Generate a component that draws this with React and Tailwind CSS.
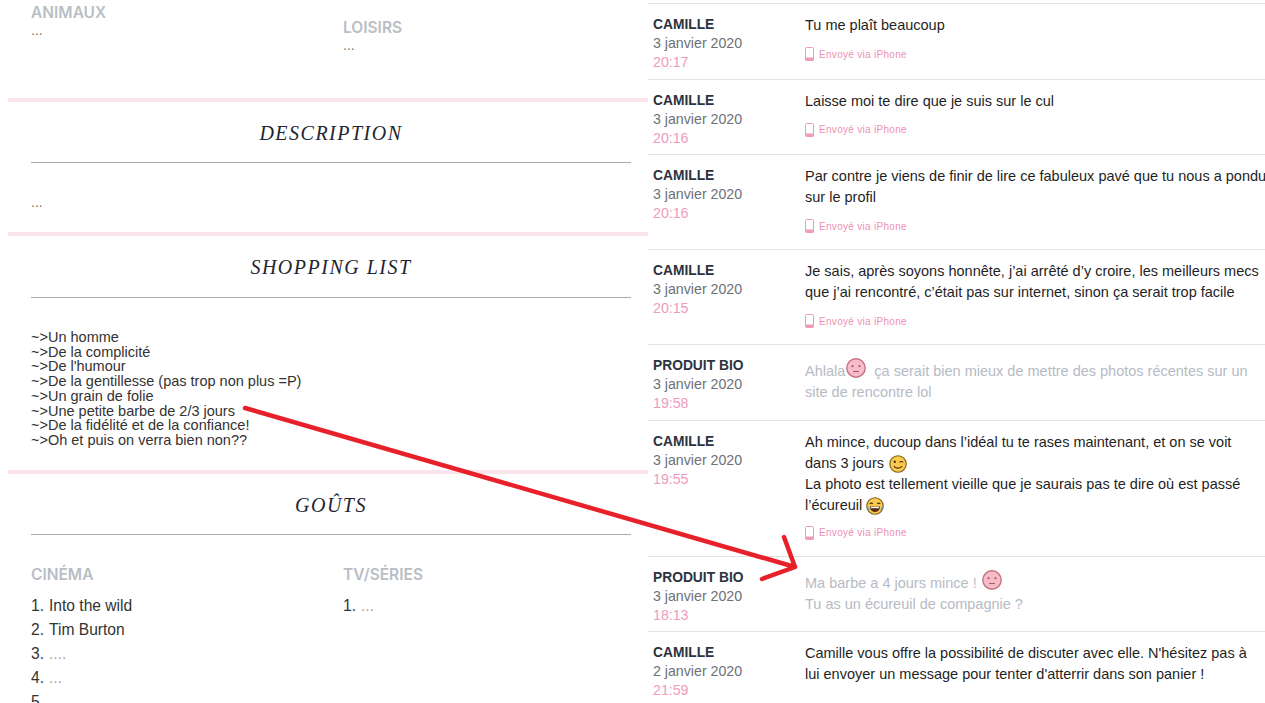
const sans = 'font-["Liberation_Sans",Arial,sans-serif]';

function PhoneIcon() {
  return (
    <svg width="9" height="14" viewBox="0 0 9 14" className="shrink-0">
      <rect x="0.5" y="0.5" width="8" height="13" rx="1" fill="none" stroke="#ee9cbc" />
      <rect x="0.5" y="10.5" width="8" height="3" rx="0.5" fill="#ee9cbc" />
    </svg>
  );
}

function PinkFace() {
  return (
    <svg width="20" height="20" viewBox="0 0 20 20" className="inline-block mt-[2px] ml-[1px] align-[-2px]">
      <circle cx="10" cy="10" r="9.2" fill="#f7bcc8" stroke="#c4707f" strokeWidth="1.4" />
      <circle cx="6.6" cy="8.2" r="1.1" fill="#a85a68" />
      <circle cx="13.4" cy="8.2" r="1.1" fill="#a85a68" />
      <path d="M7 13.5h6" stroke="#a85a68" strokeWidth="1.1" />
    </svg>
  );
}

function WinkFace() {
  return (
    <svg width="18" height="18" viewBox="0 0 18 18" className="inline-block my-[-4px] ml-[1px] align-[-1px]">
      <circle cx="9" cy="9" r="8.2" fill="#fbc94d" stroke="#7a5a12" strokeWidth="1.1" />
      <circle cx="5.8" cy="6.8" r="1.2" fill="#4a3510" />
      <path d="M10.5 7.4c1-1.2 2.6-1.2 3.6 0" fill="none" stroke="#4a3510" strokeWidth="1.1" />
      <path d="M5 11c1 2.6 6.4 3 8.2 0" fill="none" stroke="#4a3510" strokeWidth="1.1" />
    </svg>
  );
}

function LaughFace() {
  return (
    <svg width="18" height="18" viewBox="0 0 18 18" className="inline-block my-[-4px] align-[-1px]">
      <circle cx="9" cy="9" r="8.2" fill="#fbc94d" stroke="#7a5a12" strokeWidth="1.1" />
      <path d="M3.8 7c.8-1.2 2.2-1.2 3 0M11.2 7c.8-1.2 2.2-1.2 3 0" fill="none" stroke="#4a3510" strokeWidth="1.1" />
      <path d="M4 9.6h10c0 3.6-2.2 5.4-5 5.4s-5-1.8-5-5.4z" fill="#5a2c12" />
      <path d="M5 9.8h8v1.4H5z" fill="#fff" />
      <path d="M.8 9.5c1.4.6 2.6 1.8 2.8 3.4-1.6.2-3-1.4-2.8-3.4zM17.2 9.5c-1.4.6-2.6 1.8-2.8 3.4 1.6.2 3-1.4 2.8-3.4z" fill="#4aa3e8" />
    </svg>
  );
}

const messages = [
  { who: 'CAMILLE', date: '3 janvier 2020', time: '20:17', via: true, body: <>Tu me plaît beaucoup</> },
  { who: 'CAMILLE', date: '3 janvier 2020', time: '20:16', via: true, body: <>Laisse moi te dire que je suis sur le cul</> },
  {
    who: 'CAMILLE', date: '3 janvier 2020', time: '20:16', via: true,
    body: <>Par contre je viens de finir de lire ce fabuleux pavé que tu nous a pondu<br />sur le profil</>,
  },
  {
    who: 'CAMILLE', date: '3 janvier 2020', time: '20:15', via: true,
    body: <>Je sais, après soyons honnête, j’ai arrêté d’y croire, les meilleurs mecs<br />que j’ai rencontré, c’était pas sur internet, sinon ça serait trop facile</>,
  },
  {
    who: 'PRODUIT BIO', date: '3 janvier 2020', time: '19:58', faded: true,
    body: <>Ahlala<PinkFace /> &nbsp;ça serait bien mieux de mettre des photos récentes sur un<br />site de rencontre lol</>,
  },
  {
    who: 'CAMILLE', date: '3 janvier 2020', time: '19:55', via: true, tight: true,
    body: <>Ah mince, ducoup dans l’idéal tu te rases maintenant, et on se voit<br />dans 3 jours <WinkFace /><br />La photo est tellement vieille que je saurais pas te dire où est passé<br />l’écureuil <LaughFace /></>,
  },
  {
    who: 'PRODUIT BIO', date: '3 janvier 2020', time: '18:13', faded: true,
    body: <>Ma barbe a 4 jours mince ! <PinkFace /><br />Tu as un écureuil de compagnie ?</>,
  },
  {
    who: 'CAMILLE', date: '2 janvier 2020', time: '21:59',
    body: <>Camille vous offre la possibilité de discuter avec elle. N&apos;hésitez pas à<br />lui envoyer un message pour tenter d&apos;atterrir dans son panier !</>,
  },
];

function Message({ m }) {
  return (
    <div className="flex border-t border-[#e2e2e2] pt-[11px] pb-[6.5px] pl-[5px]">
      <div className="w-[152px] shrink-0 leading-[19px]">
        <div className="text-[13.8px] font-bold text-[#2b333e]">{m.who}</div>
        <div className="text-[14.2px] text-[#6d7178]">{m.date}</div>
        <div className="text-[14.2px] text-[#ee9cbc]">{m.time}</div>
      </div>
      <div className="min-w-0 whitespace-nowrap">
        <div className={`text-[14.5px] leading-[21px] ${m.faded ? 'text-[#b6bbc4]' : 'text-[#1f1f1f]'}`}>{m.body}</div>
        {m.via && (
          <div className={`${m.tight ? 'mt-[10px]' : 'mt-[11px]'} mb-[9.5px] flex h-[14px] items-center gap-[5px] text-[10px] tracking-[0.3px] text-[#ee8fb4]`}>
            <PhoneIcon />
            Envoyé via iPhone
          </div>
        )}
      </div>
    </div>
  );
}

function SectionTitle({ children, tall }) {
  return (
    <div className={`border-b border-[#aaaaaa] pt-[20px] ${tall ? 'pb-[19px]' : 'pb-[18px]'} text-center font-['Liberation_Serif',serif] text-[20px] italic leading-[22px] tracking-[1.5px] text-[#1f2530]`}>
      {children}
    </div>
  );
}

function ColHead({ children }) {
  return <div className="font-['Inter',sans-serif] text-[15.5px] font-semibold leading-[18px] text-[#b9bec5]">{children}</div>;
}

const wishes = [
  '~>Un homme', '~>De la complicité', "~>De l'humour", '~>De la gentillesse (pas trop non plus =P)',
  '~>Un grain de folie', '~>Une petite barbe de 2/3 jours', '~>De la fidélité et de la confiance!', '~>Oh et puis on verra bien non??',
];

const cinema = ['Into the wild', 'Tim Burton', '....', '...', ''];

export default function App() {
  return (
    <div className={`relative flex h-[703px] w-[1265px] overflow-hidden bg-white ${sans}`}>
      <div className="w-[648px] shrink-0 pl-2">
        <div className="grid h-[98px] grid-cols-[312px_1fr] pl-[23px] pt-[4px] text-[14px] leading-[16px] text-[#777]">
          <div>
            <ColHead>ANIMAUX</ColHead>
            <div>...</div>
          </div>
          <div className="pt-[15px]">
            <ColHead>LOISIRS</ColHead>
            <div>...</div>
          </div>
        </div>

        <div className="h-1 bg-[#fce4ec]" />
        <div className="h-[130px] pl-[23px] pr-[17px]">
          <SectionTitle>DESCRIPTION</SectionTitle>
          <div className="pt-[31px] text-[14px] leading-[16px] text-[#777]">...</div>
        </div>

        <div className="h-1 bg-[#fce4ec]" />
        <div className="h-[234px] pl-[23px] pr-[17px]">
          <SectionTitle tall>SHOPPING LIST</SectionTitle>
          <div className="pt-[32px] text-[14.5px] leading-[14.7px] text-[#333]">
            {wishes.map((w) => <div key={w}>{w}</div>)}
          </div>
        </div>

        <div className="h-1 bg-[#fce4ec]" />
        <div className="pl-[23px] pr-[17px]">
          <SectionTitle>GOÛTS</SectionTitle>
          <div className="grid grid-cols-[312px_1fr] pt-[31px]">
            <div>
              <ColHead>CINÉMA</ColHead>
              <ol className="mt-[10px] text-[15.6px] leading-[24px] text-[#333]">
                {cinema.map((c, i) => (
                  <li key={i} className="flex">
                    <span className="w-[18px]">{i + 1}.</span>
                    <span className={c.startsWith('.') ? 'text-[#aaa]' : ''}>{c}</span>
                  </li>
                ))}
              </ol>
            </div>
            <div>
              <ColHead>TV/SÉRIES</ColHead>
              <ol className="mt-[10px] text-[15.6px] leading-[24px] text-[#333]">
                <li className="flex">
                  <span className="w-[18px]">1.</span>
                  <span className="text-[#aaa]">...</span>
                </li>
              </ol>
            </div>
          </div>
        </div>
      </div>

      <div className="min-w-0 flex-1 pt-[3px]">
        {messages.map((m) => <Message key={m.time + m.date} m={m} />)}
      </div>

      <svg width="1265" height="703" className="pointer-events-none absolute left-0 top-0">
        <path d="M245 408L795 567M784 537L795 567L762 579" fill="none" stroke="#e8202a" strokeWidth="4.5" strokeLinecap="round" strokeLinejoin="round" />
      </svg>
    </div>
  );
}
